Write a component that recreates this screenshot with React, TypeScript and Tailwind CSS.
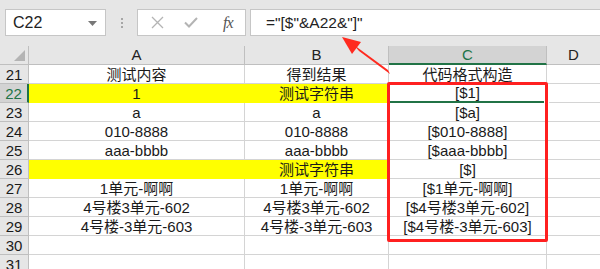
import React from "react";

const GREEN = "#217346";

type Row = {
    n: number;
    a?: string;
    b?: string;
    c?: string;
    yellowA?: boolean;
    yellowB?: boolean;
};

const rows: Row[] = [
    { n: 21, a: "测试内容", b: "得到结果", c: "代码格式构造" },
    { n: 22, a: "1", b: "测试字符串", c: "[$1]", yellowA: true, yellowB: true },
    { n: 23, a: "a", b: "a", c: "[$a]" },
    { n: 24, a: "010-8888", b: "010-8888", c: "[$010-8888]" },
    { n: 25, a: "aaa-bbbb", b: "aaa-bbbb", c: "[$aaa-bbbb]" },
    { n: 26, a: "", b: "测试字符串", c: "[$]", yellowA: true, yellowB: true },
    { n: 27, a: "1单元-啊啊", b: "1单元-啊啊", c: "[$1单元-啊啊]" },
    { n: 28, a: "4号楼3单元-602", b: "4号楼3单元-602", c: "[$4号楼3单元-602]" },
    { n: 29, a: "4号楼-3单元-603", b: "4号楼-3单元-603", c: "[$4号楼-3单元-603]" },
    { n: 30 },
    { n: 31 },
];

const FormulaBar = () => (
    <div className="flex items-start h-[46px] bg-[#e6e6e6] pt-[9px] pl-[5px]">
        {/* Name box */}
        <div className="relative w-[101px] h-[27px] bg-white border border-[#c6c6c6] flex items-center pl-[7px] text-[16px] text-[#222]">
            C22
            <svg className="absolute right-[8px] top-[11px]" width="9" height="5" viewBox="0 0 9 5">
                <path d="M0 0 L9 0 L4.5 5 Z" fill="#777" />
            </svg>
        </div>
        {/* grip dots */}
        <div className="w-[31px] h-[27px] flex flex-col items-center justify-center gap-[2px]">
            <span className="w-[2px] h-[2px] bg-[#a6a6a6]" />
            <span className="w-[2px] h-[2px] bg-[#a6a6a6]" />
            <span className="w-[2px] h-[2px] bg-[#a6a6a6]" />
        </div>
        {/* cancel / enter / fx */}
        <div className="w-[109px] h-[27px] bg-white border border-[#c6c6c6] flex items-center">
            <svg className="ml-[13px]" width="13" height="13" viewBox="0 0 13 13">
                <path d="M1 1 L12 12 M12 1 L1 12" stroke="#b4b4b4" strokeWidth="1.3" />
            </svg>
            <svg className="ml-[20px]" width="14" height="11" viewBox="0 0 14 11">
                <path d="M1 5.5 L5 9.5 L13 1" stroke="#b4b4b4" strokeWidth="2" fill="none" />
            </svg>
            <span className="ml-[25px] text-[16px] italic text-[#555] font-['Liberation_Serif',serif] tracking-[-1px]">
                fx
            </span>
        </div>
        {/* formula */}
        <div className="ml-[4px] flex-1 h-[27px] bg-white border border-r-0 border-[#c6c6c6] flex items-center pl-[15px] text-[15.5px] text-[#222]">
            ="[$"&amp;A22&amp;"]"
        </div>
    </div>
);

const HeaderRow = () => (
    <div className="flex h-[19px] bg-[#e6e6e6] text-[15px] leading-[18px] text-[#222]">
        <div className="w-[29px] border-r border-b border-[#bfbfbf] relative">
            <svg className="absolute left-[14px] top-[4px]" width="11" height="11" viewBox="0 0 11 11">
                <path d="M11 0 L11 11 L0 11 Z" fill="#b4b4b4" />
            </svg>
        </div>
        <div className="w-[216px] border-r border-b border-[#bfbfbf] text-center">A</div>
        <div className="w-[144px] border-r border-b border-[#bfbfbf] text-center">B</div>
        <div
            className="w-[158px] border-r border-[#bfbfbf] border-b-2 bg-[#d3d3d3] text-center text-[#217346]"
            style={{ borderBottomColor: GREEN }}
        >
            C
        </div>
        <div className="flex-1 border-b border-[#bfbfbf] text-center">D</div>
    </div>
);

const Cell = ({ w, text, yellow }: { w: string; text?: string; yellow?: boolean }) => (
    <div
        className={`${w} border-r border-b flex items-end justify-center whitespace-nowrap ${
            yellow ? "bg-[#ffff00] border-[#ffff00]" : "border-[#d4d4d4]"
        }`}
    >
        {text}
    </div>
);

const App: React.FC = () => {
    return (
        <div
            lang="zh-CN"
            className="relative w-[600px] h-[269px] overflow-hidden bg-white font-['Liberation_Sans','Noto_Sans_CJK_SC',sans-serif]"
        >
            <FormulaBar />
            <HeaderRow />
            {rows.map((r) => {
                const selected = r.n === 22;
                return (
                    <div key={r.n} className="flex h-[19px] text-[15px] leading-[17px] text-[#1a1a1a]">
                        <div
                            className={`w-[29px] border-b border-[#bfbfbf] flex items-end justify-center ${
                                selected ? "bg-[#d3d3d3] text-[#217346] border-r-2" : "bg-[#e6e6e6] border-r"
                            }`}
                            style={selected ? { borderRightColor: GREEN } : { borderRightColor: "#bfbfbf" }}
                        >
                            {r.n}
                        </div>
                        <Cell w="w-[216px]" text={r.a} yellow={r.yellowA} />
                        <Cell w="w-[144px]" text={r.b} yellow={r.yellowB} />
                        <div
                            className={`w-[158px] border-r border-[#d4d4d4] flex items-end justify-center whitespace-nowrap relative ${
                                selected ? "border-b-2" : "border-b"
                            }`}
                            style={selected ? { borderBottomColor: GREEN } : undefined}
                        >
                            {r.c}
                            {selected && (
                                <span className="absolute right-[-3px] bottom-[-4px] w-[5px] h-[5px] bg-[#217346] border border-white" />
                            )}
                        </div>
                        <div className="flex-1 border-b border-[#d4d4d4]" />
                    </div>
                );
            })}

            {/* red highlight box */}
            <div className="absolute left-[387px] top-[82px] w-[161px] h-[160px] border-[3px] border-[#ff2020] rounded-[2px]" />

            {/* red arrow */}
            <svg className="absolute left-0 top-0 pointer-events-none" width="600" height="269">
                <polygon points="342,37 361,42 352,54" fill="#ff2a1f" />
                <polygon points="354,45 359,51 390,74 388,70" fill="#ff2a1f" />
            </svg>
        </div>
    );
};

export default App;
